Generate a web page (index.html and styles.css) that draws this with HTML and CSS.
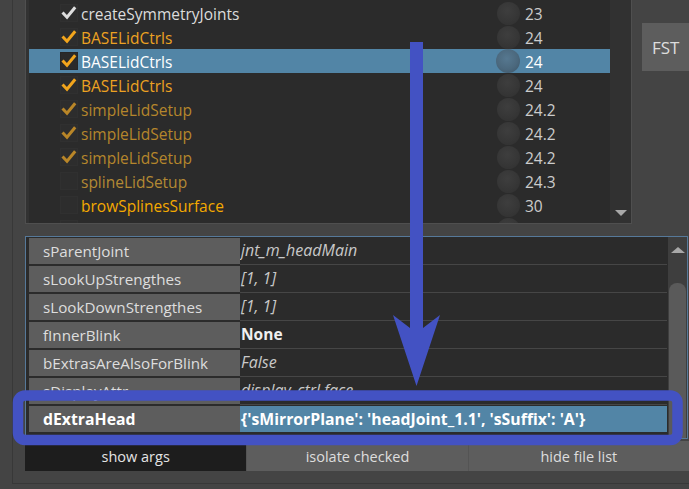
FILE: index.html
```html
<!DOCTYPE html>
<html>
<head>
<meta charset="utf-8">
<link rel="stylesheet" href="styles.css">
</head>
<body>
<div class="frame">
  <div class="top">
    <div class="list">
      <div class="rows">
        <div class="row"><span class="cb"><svg viewBox="0 0 18 18"><path class="ck ck-white" d="M2.5 8.5 L7 13.2 L15.2 3.2"/></svg></span><span class="name c-white">createSymmetryJoints</span><span class="dot"></span><span class="num">23</span></div>
        <div class="row"><span class="cb"><svg viewBox="0 0 18 18"><path class="ck ck-orange" d="M2.5 8.5 L7 13.2 L15.2 3.2"/></svg></span><span class="name c-orange">BASELidCtrls</span><span class="dot"></span><span class="num">24</span></div>
        <div class="row sel"><span class="cb"><svg viewBox="0 0 18 18"><path class="ck ck-orange" d="M2.5 8.5 L7 13.2 L15.2 3.2"/></svg></span><span class="name">BASELidCtrls</span><span class="dot"></span><span class="num">24</span></div>
        <div class="row"><span class="cb"><svg viewBox="0 0 18 18"><path class="ck ck-orange" d="M2.5 8.5 L7 13.2 L15.2 3.2"/></svg></span><span class="name c-orange">BASELidCtrls</span><span class="dot"></span><span class="num">24</span></div>
        <div class="row"><span class="cb"><svg viewBox="0 0 18 18"><path class="ck ck-dim" d="M2.5 8.5 L7 13.2 L15.2 3.2"/></svg></span><span class="name c-dim">simpleLidSetup</span><span class="dot"></span><span class="num">24.2</span></div>
        <div class="row"><span class="cb"><svg viewBox="0 0 18 18"><path class="ck ck-dim" d="M2.5 8.5 L7 13.2 L15.2 3.2"/></svg></span><span class="name c-dim">simpleLidSetup</span><span class="dot"></span><span class="num">24.2</span></div>
        <div class="row"><span class="cb"><svg viewBox="0 0 18 18"><path class="ck ck-dim" d="M2.5 8.5 L7 13.2 L15.2 3.2"/></svg></span><span class="name c-dim">simpleLidSetup</span><span class="dot"></span><span class="num">24.2</span></div>
        <div class="row"><span class="cb"></span><span class="name c-dim2">splineLidSetup</span><span class="dot"></span><span class="num">24.3</span></div>
        <div class="row"><span class="cb"></span><span class="name c-bright">browSplinesSurface</span><span class="dot"></span><span class="num">30</span></div>
        <div class="row"><span class="cb"></span><span class="name"></span><span class="dot"></span><span class="num"></span></div>
      </div>
      <div class="vscroll"><span class="arrow-down"></span></div>
    </div>
    <div class="side">
      <div class="fst">FST</div>
    </div>
  </div>

  <div class="table">
    <div class="grid">
      <div class="trow"><div class="key">sParentJoint</div><div class="val">jnt_m_headMain</div></div>
      <div class="trow"><div class="key">sLookUpStrengthes</div><div class="val">[1, 1]</div></div>
      <div class="trow"><div class="key">sLookDownStrengthes</div><div class="val">[1, 1]</div></div>
      <div class="trow"><div class="key">fInnerBlink</div><div class="val strong">None</div></div>
      <div class="trow"><div class="key">bExtrasAreAlsoForBlink</div><div class="val">False</div></div>
      <div class="trow"><div class="key">sDisplayAttr</div><div class="val">display_ctrl.face</div></div>
      <div class="trow sel"><div class="key">dExtraHead</div><div class="val">{'sMirrorPlane': 'headJoint_1.1', 'sSuffix': 'A'}</div></div>
    </div>
    <div class="tscroll"><span class="arrow-up"></span><span class="handle"></span></div>
  </div>

  <div class="buttons">
    <div class="btn active">show args</div>
    <div class="btn">isolate checked</div>
    <div class="btn">hide file list</div>
  </div>
</div>

<svg class="overlay" width="689" height="489" viewBox="0 0 689 489">
  <path class="anno" d="M410 42 L423 42 L423 328 L440 315 L416.5 386 L393 315 L410 328 Z"/>
  <rect class="anno-box" x="18" y="395.5" width="659.5" height="44.5" rx="7" ry="7"/>
</svg>
</body>
</html>
```

FILE: styles.css
```css
* { box-sizing: border-box; }
html, body { margin: 0; padding: 0; }
body {
  width: 689px;
  height: 489px;
  overflow: hidden;
  position: relative;
  background: #444444;
  font-family: "Open Sans", "Noto Sans", sans-serif;
  font-size: 15px;
  color: #dddddd;
}

.frame {
  margin-left: 12px;
  width: 700px;
  height: 484px;
  border-left: 1px solid #383838;
  border-bottom: 1px solid #383838;
  padding-left: 12px;
}

/* ---------- top list ---------- */
.top { display: flex; height: 224px; }

.list {
  width: 607px;
  height: 224px;
  display: flex;
  background: #323232;
  border: 1px solid #4f4f4f;
  border-top: none;
  padding-left: 3px;
}

.rows {
  width: 581px;
  height: 223px;
  background: #2b2b2b;
  overflow: hidden;
  padding-top: 1px;
}

.row {
  display: flex;
  align-items: center;
  height: 24px;
  white-space: nowrap;
  font-size: 15.5px;
}
.row.sel { background: #5285a6; }

.cb {
  width: 18px;
  height: 18px;
  margin-left: 31px;
  background: #2d2d2d;
  border: 1px solid #303030;
  display: flex;
}
.row.sel .cb { background: #2a2a2a; border-color: #262626; }
.cb svg { width: 18px; height: 18px; margin: -1px; }
.ck { fill: none; stroke-width: 3; stroke-linejoin: miter; }
.ck-white { stroke: #dedede; }
.ck-orange { stroke: #f2a51c; }
.ck-dim { stroke: #b98628; }

.name { width: 419px; padding-left: 3px; padding-top: 1px; }
.row.sel .name { color: #ffffff; }
.c-white { color: #dcdcdc; }
.c-orange { color: #eda222; }
.c-dim { color: #b5862c; }
.c-dim2 { color: #b38934; }
.c-bright { color: #f4a900; }

.dot {
  width: 23px;
  height: 23px;
  border-radius: 50%;
  background: radial-gradient(circle at 45% 38%, #3e3e3e 0%, #373737 50%, #2f2f2f 100%);
}
.row.sel .dot {
  width: 24px;
  height: 24px;
  margin-left: -1px;
  background: radial-gradient(circle at 45% 40%, #567890 0%, #4b687d 55%, #3b5264 100%);
}
.num { margin-left: 5px; color: #cccccc; padding-top: 1px; }
.row.sel .num { color: #ffffff; margin-left: 5px; }

.vscroll {
  width: 21px;
  background: #313131;
  display: flex;
  flex-direction: column;
  justify-content: flex-end;
  align-items: center;
  padding-bottom: 7px;
}
.arrow-down {
  width: 0; height: 0;
  border-left: 6px solid transparent;
  border-right: 6px solid transparent;
  border-top: 6px solid #a8a8a8;
}

.side { padding-left: 10px; padding-top: 23px; }
.fst {
  width: 60px;
  height: 48px;
  background: #5d5d5d;
  color: #dddddd;
  font-size: 17px;
  padding-left: 10px;
  display: flex;
  align-items: center;
}

/* ---------- property table ---------- */
.table {
  margin-top: 12px;
  width: 663px;
  height: 203px;
  border: 1px solid #56799a;
  background: #2b2b2b;
  display: flex;
  padding-left: 3px;
}
.grid { width: 638px; }
.trow { display: flex; height: 28px; }
.key {
  width: 211px;
  margin: 1px 0;
  background: #5d5d5d;
  padding-left: 14px;
  line-height: 26px;
  font-size: 15.2px;
  color: #dddddd;
  white-space: nowrap;
  overflow: hidden;
}
.val {
  flex: 1;
  border-bottom: 1px solid #464646;
  padding-left: 1px;
  line-height: 27px;
  font-size: 16px;
  font-style: italic;
  color: #c8c8c8;
  white-space: nowrap;
  overflow: hidden;
}
.val.strong { font-style: normal; font-weight: bold; color: #f0f0f0; font-size: 15.5px; }
.trow.sel .key { font-weight: bold; color: #ffffff; font-size: 15.8px; }
.trow.sel .val {
  margin: 1px 0;
  border-bottom: none;
  background: #5285a6;
  font-style: normal;
  font-weight: bold;
  font-size: 15.8px;
  color: #ffffff;
  line-height: 26px;
}

.tscroll {
  width: 20px;
  background: #3e3e3e;
  border-left: 1px solid #2b2b2b;
  display: flex;
  flex-direction: column;
  align-items: center;
  padding-top: 10px;
}
.arrow-up {
  width: 0; height: 0;
  border-left: 7px solid transparent;
  border-right: 7px solid transparent;
  border-bottom: 6px solid #a8a8a8;
}
.handle {
  margin-top: 30px;
  width: 17px;
  flex: 1;
  border-radius: 8px 8px 0 0;
  background: #5a5a5a;
}

/* ---------- buttons ---------- */
.buttons {
  margin-top: 2px;
  width: 664px;
  height: 30px;
  display: grid;
  grid-template-columns: repeat(3, 1fr);
}
.btn {
  background: #5d5d5d;
  color: #dddddd;
  display: flex;
  align-items: center;
  justify-content: center;
  font-size: 14.5px;
}
.btn.active { background: #1d1d1d; color: #e4e4e4; }
.btn + .btn { border-left: 1px solid #545454; }

/* ---------- annotation overlay ---------- */
.overlay {
  position: absolute;
  left: 0;
  top: 0;
  pointer-events: none;
}
.anno { fill: #4352c3; }
.anno-box { fill: none; stroke: #4352c3; stroke-width: 10.5; }
```
